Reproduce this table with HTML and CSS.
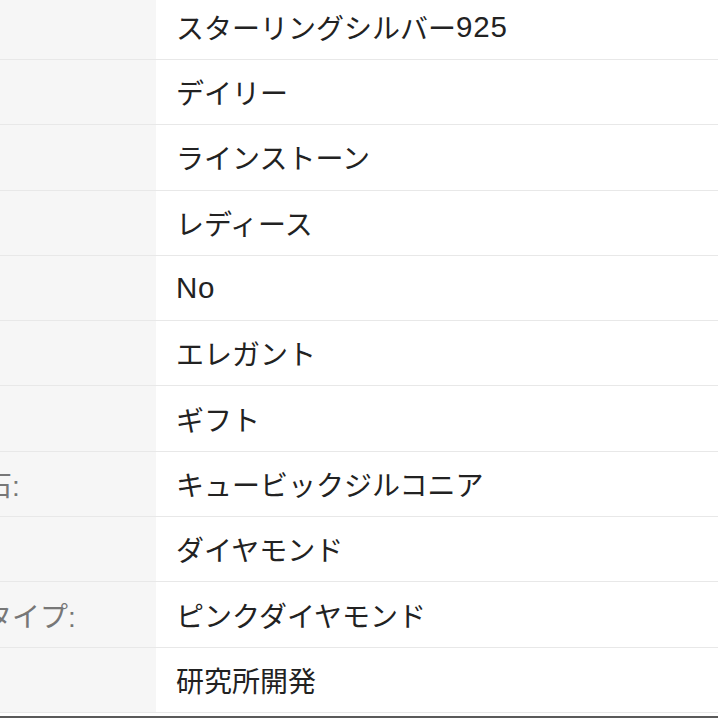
FILE: index.html
```html
<!DOCTYPE html>
<html lang="ja">
<head>
<meta charset="utf-8">
<link rel="stylesheet" href="styles.css">
</head>
<body>
<div class="specs">
  <div class="row"><div class="label">素材:</div><div class="value">スターリングシルバー<span class="latin">925</span></div></div>
  <div class="row"><div class="label">用途:</div><div class="value">デイリー</div></div>
  <div class="row"><div class="label">装飾:</div><div class="value">ラインストーン</div></div>
  <div class="row"><div class="label">性別:</div><div class="value">レディース</div></div>
  <div class="row"><div class="label">調節:</div><div class="value"><span class="latin">No</span></div></div>
  <div class="row"><div class="label">風格:</div><div class="value">エレガント</div></div>
  <div class="row"><div class="label">機会:</div><div class="value">ギフト</div></div>
  <div class="row"><div class="label">天然石:</div><div class="value">キュービックジルコニア</div></div>
  <div class="row"><div class="label">宝石:</div><div class="value">ダイヤモンド</div></div>
  <div class="row"><div class="label">石のタイプ:</div><div class="value">ピンクダイヤモンド</div></div>
  <div class="row"><div class="label">産地:</div><div class="value">研究所開発</div></div>
</div>
<div class="footer"></div>
</body>
</html>
```
FILE: styles.css
```css
html, body {
  margin: 0;
  padding: 0;
  background: #ffffff;
  overflow: hidden;
}
body {
  width: 718px;
  height: 718px;
  font-family: "Liberation Sans", "Noto Sans CJK JP", sans-serif;
}
.specs {
  margin-top: -5.3px;
  margin-left: -100px;
  width: 818px;
}
.row {
  display: grid;
  grid-template-columns: 256px 1fr;
  height: 65.3px;
  box-sizing: border-box;
  border-bottom: 1.3px solid #e8e8e8;
}
.label {
  background: #f6f6f6;
  color: #777777;
  font-size: 28px;
  padding-left: 28px;
  display: flex;
  align-items: center;
  white-space: nowrap;
  overflow: hidden;
}
.value {
  color: #222222;
  font-size: 28px;
  padding-left: 20px;
  display: flex;
  align-items: center;
  white-space: nowrap;
}
.latin {
  font-size: 29.5px;
  letter-spacing: 0.8px;
}
.footer {
  margin-top: 3px;
  height: 2px;
  background: #5a5a5a;
}
```
